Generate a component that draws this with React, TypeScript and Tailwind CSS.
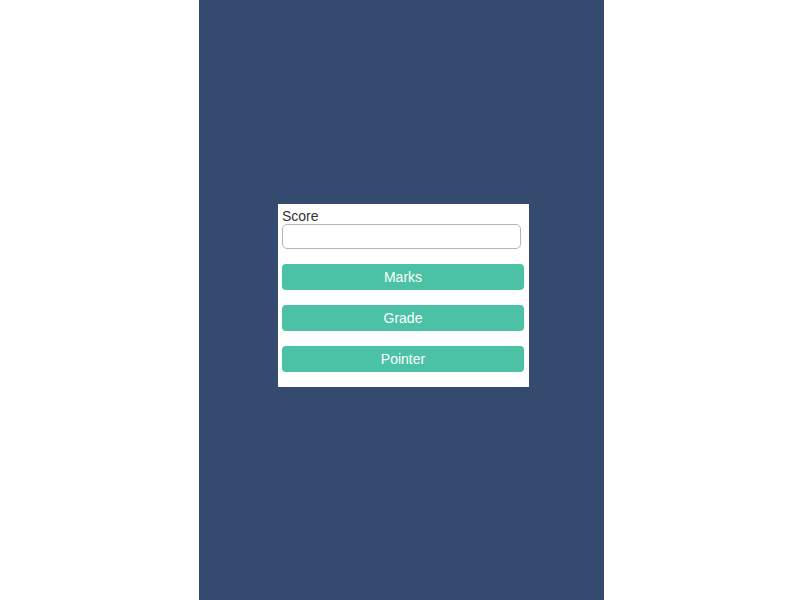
const buttons = ['Marks', 'Grade', 'Pointer'];

const App = () => {
  return (
    <div className="min-h-screen w-full bg-white" style={{ fontFamily: '"Liberation Sans", Arial, sans-serif' }}>
      <div className="ml-[199px] flex h-[600px] w-[405px] flex-col bg-[#354a6f] pl-[79px] pt-[204px]">
        <div className="flex w-[251px] flex-col bg-white pb-[15px] pl-[4px] pr-[5px] pt-[4px]">
          <label className="h-[16px] text-[14px] leading-[16px] text-[#333]">Score</label>
          <input
            type="text"
            className="h-[25px] w-[239px] rounded-[5px] border border-[#b5b5b5] bg-white px-1 text-[14px] outline-none"
          />
          <div className="mt-[15px] flex flex-col gap-[15px]">
            {buttons.map(b => (
              <button
                key={b}
                className="h-[26px] w-[242px] rounded-[4px] bg-[#4bc2a5] text-[14px] leading-[26px] text-white"
              >
                {b}
              </button>
            ))}
          </div>
        </div>
      </div>
    </div>
  );
};

export default App;
